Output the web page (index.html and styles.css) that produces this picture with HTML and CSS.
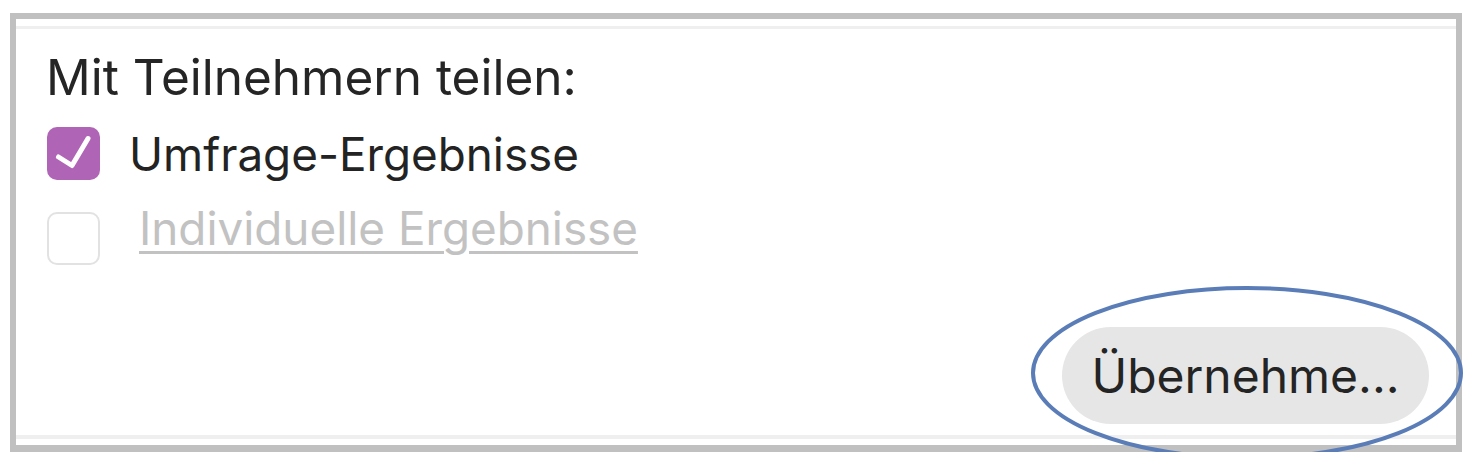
FILE: index.html
```html
<!DOCTYPE html>
<html lang="de">
<head>
<meta charset="utf-8">
<title>Mit Teilnehmern teilen</title>
<link rel="stylesheet" href="styles.css">
</head>
<body>
<div class="frame">
  <div class="rule rule-top"></div>
  <div class="panel">
    <div class="heading">Mit Teilnehmern teilen:</div>
    <div class="options">
      <div class="option">
        <span class="box box-checked">
          <svg viewBox="0 0 53 53" width="53" height="53"><path d="M11.5 30 L25 38.5 L41 11.5" fill="none" stroke="#fff" stroke-width="5" stroke-linecap="round" stroke-linejoin="round"/></svg>
        </span>
        <span class="label">Umfrage-Ergebnisse</span>
      </div>
      <div class="option option-disabled">
        <span class="box"></span>
        <span class="label label-link">Individuelle Ergebnisse</span>
      </div>
    </div>
    <div class="actions">
      <button class="btn" type="button">Übernehme...</button>
    </div>
  </div>
  <div class="rule rule-bottom"></div>
  <svg class="annotation" width="440" height="180" viewBox="0 0 440 180"><ellipse cx="216" cy="87" rx="214" ry="85" fill="none" stroke="#5a7db7" stroke-width="4"/></svg>
</div>
</body>
</html>
```

FILE: styles.css
```css
html, body {
  margin: 0;
  padding: 0;
  background: #ffffff;
}

body {
  font-family: "Inter", "Liberation Sans", sans-serif;
  color: #232323;
}

.frame {
  position: relative;
  box-sizing: border-box;
  margin: 13px 0 0 10px;
  width: 1452px;
  height: 439px;
  border: 6px solid #c0c0c0;
  border-bottom-width: 7px;
  display: flex;
  flex-direction: column;
  background: #ffffff;
}

.rule {
  height: 3px;
  background: #efefef;
  flex: none;
}

.rule-top {
  margin-top: 7px;
}

.rule-bottom {
  height: 4px;
  margin-bottom: 6px;
}

.panel {
  flex: 1;
  display: flex;
  flex-direction: column;
  padding: 18px 27px 11px 31px;
}

.heading {
  font-size: 49.5px;
  line-height: 60px;
  margin-left: -1px;
  color: #252525;
}

.options {
  display: flex;
  flex-direction: column;
  gap: 32px;
  margin-top: 20px;
}

.option {
  display: flex;
  align-items: flex-start;
  height: 53px;
}

.box {
  box-sizing: border-box;
  flex: none;
  width: 53px;
  height: 53px;
  border-radius: 10px;
  border: 2px solid #e2e2e2;
  background: #ffffff;
}

.box-checked {
  border: none;
  background: #b064b6;
}

.box svg {
  display: block;
}

.label {
  font-size: 45.8px;
  line-height: 53px;
  margin-left: 29px;
  margin-top: 1px;
  white-space: nowrap;
}

.label-link {
  color: #c2c2c2;
  text-decoration: underline;
  text-decoration-thickness: 3px;
  text-underline-offset: 6px;
  margin-left: 39px;
  margin-top: -10px;
}

.actions {
  margin-top: auto;
  display: flex;
  justify-content: flex-end;
}

.btn {
  width: 367px;
  height: 97px;
  border: none;
  border-radius: 49px;
  background: #e6e6e6;
  color: #242424;
  font-family: "Inter", "Liberation Sans", sans-serif;
  font-size: 48px;
  padding: 0;
}

.annotation {
  position: absolute;
  left: 1015px;
  top: 267px;
  overflow: visible;
}
```
